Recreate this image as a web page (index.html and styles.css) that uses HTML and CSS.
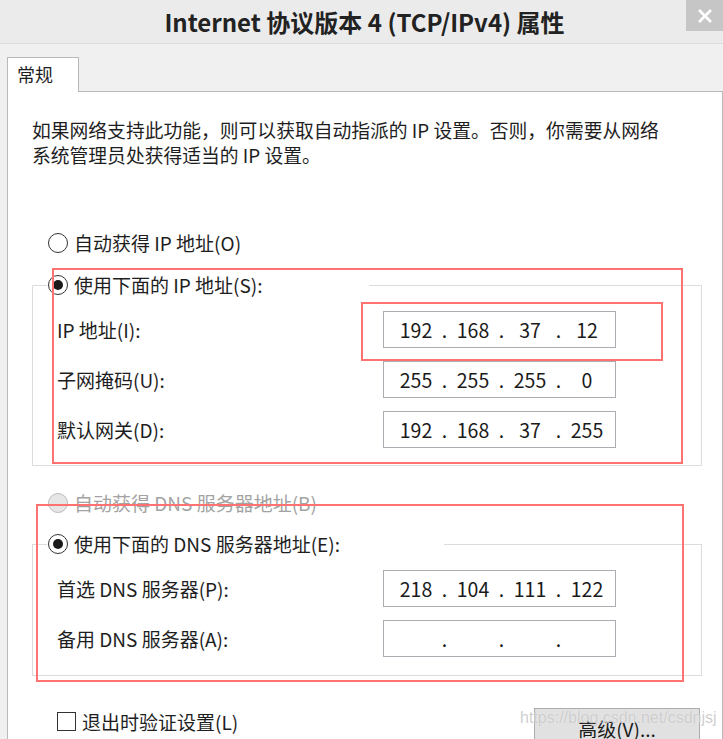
FILE: index.html
```html
<!DOCTYPE html>
<html lang="zh-CN">
<head>
<meta charset="utf-8">
<title>Internet 协议版本 4 (TCP/IPv4) 属性</title>
<link rel="stylesheet" href="styles.css">
</head>
<body>
<div class="dialog">
  <header class="titlebar">
    <span class="spacer"></span>
    <h1 class="title">Internet 协议版本 4 (TCP/IPv4) 属性</h1>
    <button class="close" aria-label="关闭">
      <svg width="16" height="16" viewBox="0 0 16 16"><path d="M2 2 L14 14 M14 2 L2 14" stroke="#fff" stroke-width="2.6" fill="none"/></svg>
    </button>
  </header>

  <div class="tabs"><div class="tab">常规</div></div>

  <div class="panel">
    <p class="desc">如果网络支持此功能，则可以获取自动指派的 IP 设置。否则，你需要从网络<br>系统管理员处获得适当的 IP 设置。</p>

    <div class="radio first"><span class="circle"></span><span>自动获得 IP 地址(O)</span></div>

    <fieldset class="group ipgroup">
      <legend class="legend ip-legend"><span class="radio"><span class="circle checked"></span><span>使用下面的 IP 地址(S):</span></span></legend>
      <div class="rows">
        <div class="row"><span class="lbl">IP 地址(I):</span>
          <div class="ip"><span class="oct">192</span><span class="dot">.</span><span class="oct">168</span><span class="dot">.</span><span class="oct">37</span><span class="dot">.</span><span class="oct">12</span></div></div>
        <div class="row"><span class="lbl">子网掩码(U):</span>
          <div class="ip"><span class="oct">255</span><span class="dot">.</span><span class="oct">255</span><span class="dot">.</span><span class="oct">255</span><span class="dot">.</span><span class="oct">0</span></div></div>
        <div class="row"><span class="lbl">默认网关(D):</span>
          <div class="ip"><span class="oct">192</span><span class="dot">.</span><span class="oct">168</span><span class="dot">.</span><span class="oct">37</span><span class="dot">.</span><span class="oct">255</span></div></div>
      </div>
    </fieldset>

    <div class="radio disabled"><span class="circle"></span><span>自动获得 DNS 服务器地址(B)</span></div>

    <fieldset class="group dnsgroup">
      <legend class="legend dns-legend"><span class="radio"><span class="circle checked"></span><span>使用下面的 DNS 服务器地址(E):</span></span></legend>
      <div class="rows">
        <div class="row"><span class="lbl">首选 DNS 服务器(P):</span>
          <div class="ip"><span class="oct">218</span><span class="dot">.</span><span class="oct">104</span><span class="dot">.</span><span class="oct">111</span><span class="dot">.</span><span class="oct">122</span></div></div>
        <div class="row"><span class="lbl">备用 DNS 服务器(A):</span>
          <div class="ip"><span class="oct"></span><span class="dot">.</span><span class="oct"></span><span class="dot">.</span><span class="oct"></span><span class="dot">.</span><span class="oct"></span></div></div>
      </div>
    </fieldset>

    <div class="footer">
      <div class="check"><span class="box"></span><span>退出时验证设置(L)</span></div>
      <button class="btn">高级(V)...</button>
    </div>
  </div>
</div>

<div class="mark mark-a"></div>
<div class="mark mark-b"></div>
<div class="mark mark-c"></div>
<div class="watermark">https://blog.csdn.net/csdnjsj</div>
</body>
</html>
```

FILE: styles.css
```css
html, body {
  margin: 0;
  padding: 0;
}
body {
  background: #f0f0f0;
  font-family: "Noto Sans CJK SC", "Noto Sans", sans-serif;
  color: #1e1e1e;
  width: 723px;
  height: 739px;
  overflow: hidden;
}
.dialog {
  display: flex;
  flex-direction: column;
}
.titlebar {
  height: 43px;
  background: #ebebeb;
  border-bottom: 1px solid #dddddd;
  display: grid;
  grid-template-columns: 1fr auto 1fr;
}
.title {
  margin: 0;
  font-size: 24px;
  font-weight: 700;
  line-height: 43px;
  color: #222;
  padding-left: 6px;
  white-space: nowrap;
}
.close {
  justify-self: end;
  align-self: start;
  width: 37px;
  height: 31px;
  border: 0;
  padding: 0;
  background: #c6c6c6;
  display: flex;
  align-items: center;
  justify-content: center;
}
.tabs {
  padding: 13px 0 0 7px;
  display: flex;
}
.tab {
  position: relative;
  z-index: 1;
  width: 72px;
  height: 35px;
  background: #fff;
  border: 1px solid #b9b9b9;
  border-bottom: 0;
  margin-bottom: -1px;
  font-size: 18px;
  line-height: 32px;
  padding-left: 9px;
  box-sizing: border-box;
}
.panel {
  margin-left: 7px;
  height: 660px;
  background: #fff;
  border: 1px solid #b9b9b9;
  border-bottom: 0;
  padding: 0 20px 0 24px;
  font-size: 19px;
}
.desc {
  margin: 25px 0 0;
  line-height: 25px;
  font-size: 18.8px;
}
.radio {
  display: flex;
  align-items: center;
  height: 26px;
  line-height: 26px;
  font-size: 19px;
  white-space: nowrap;
}
.radio.first {
  margin: 63px 0 0 16px;
}
.circle {
  width: 18px;
  height: 18px;
  border: 1px solid #333;
  border-radius: 50%;
  background: #fff;
  margin-right: 6px;
  box-sizing: content-box;
  display: flex;
  align-items: center;
  justify-content: center;
  flex: none;
}
.circle.checked::after {
  content: "";
  width: 10px;
  height: 10px;
  border-radius: 50%;
  background: #1a1a1a;
}
.radio.disabled {
  color: #a3a3a3;
  margin: 24px 0 0 16px;
}
.radio.disabled .circle {
  border-color: #bcbcbc;
  background: #e6e6e6;
}
.group {
  margin: 16px 0 0;
  padding: 0 0 17px;
  border: 1px solid #dcdcdc;
  min-width: 0;
}
.dnsgroup {
  margin-top: 15px;
  padding-bottom: 18px;
}
.legend {
  padding: 0 0 0 1px;
  margin-left: 14px;
  background: #fff;
}
.ip-legend { width: 321px; }
.dns-legend { width: 396px; }
.rows {
  display: flex;
  flex-direction: column;
  gap: 13px;
  padding: 13px 0 0 24px;
}
.row {
  display: flex;
  align-items: center;
  height: 37px;
}
.lbl {
  width: 326px;
  font-size: 19px;
  white-space: nowrap;
}
.ip {
  width: 233px;
  height: 37px;
  box-sizing: border-box;
  border: 1px solid #abadb3;
  display: flex;
  align-items: center;
  padding-left: 7px;
  font-size: 19.5px;
  color: #1a1a1a;
}
.oct {
  width: 50px;
  text-align: center;
}
.dot {
  width: 7px;
  text-align: center;
}
.footer {
  margin: 32px 2px 0 0;
  display: flex;
  justify-content: space-between;
  align-items: flex-start;
}
.check {
  display: flex;
  align-items: center;
  height: 26px;
  margin-left: 25px;
  font-size: 19px;
  white-space: nowrap;
}
.box {
  width: 17px;
  height: 17px;
  border: 1px solid #333;
  background: #fff;
  margin-right: 6px;
}
.btn {
  width: 166px;
  height: 36px;
  background: #e1e1e1;
  border: 1px solid #adadad;
  font-family: inherit;
  font-size: 19px;
  color: #1a1a1a;
  padding: 4px 0 0;
}
.mark {
  position: absolute;
  border: 2px solid #ff7272;
  box-sizing: border-box;
  pointer-events: none;
}
.mark-a { left: 52px; top: 268px; width: 631px; height: 196px; }
.mark-b { left: 361px; top: 302px; width: 302px; height: 59px; }
.mark-c { left: 36px; top: 504px; width: 648px; height: 178px; }
.watermark {
  position: absolute;
  left: 520px;
  top: 709px;
  font-family: "Liberation Sans", Arial, sans-serif;
  font-size: 16px;
  color: rgba(190, 190, 190, 0.75);
  text-shadow: 0 0 1px rgba(255, 255, 255, 0.8);
  white-space: nowrap;
}
```
